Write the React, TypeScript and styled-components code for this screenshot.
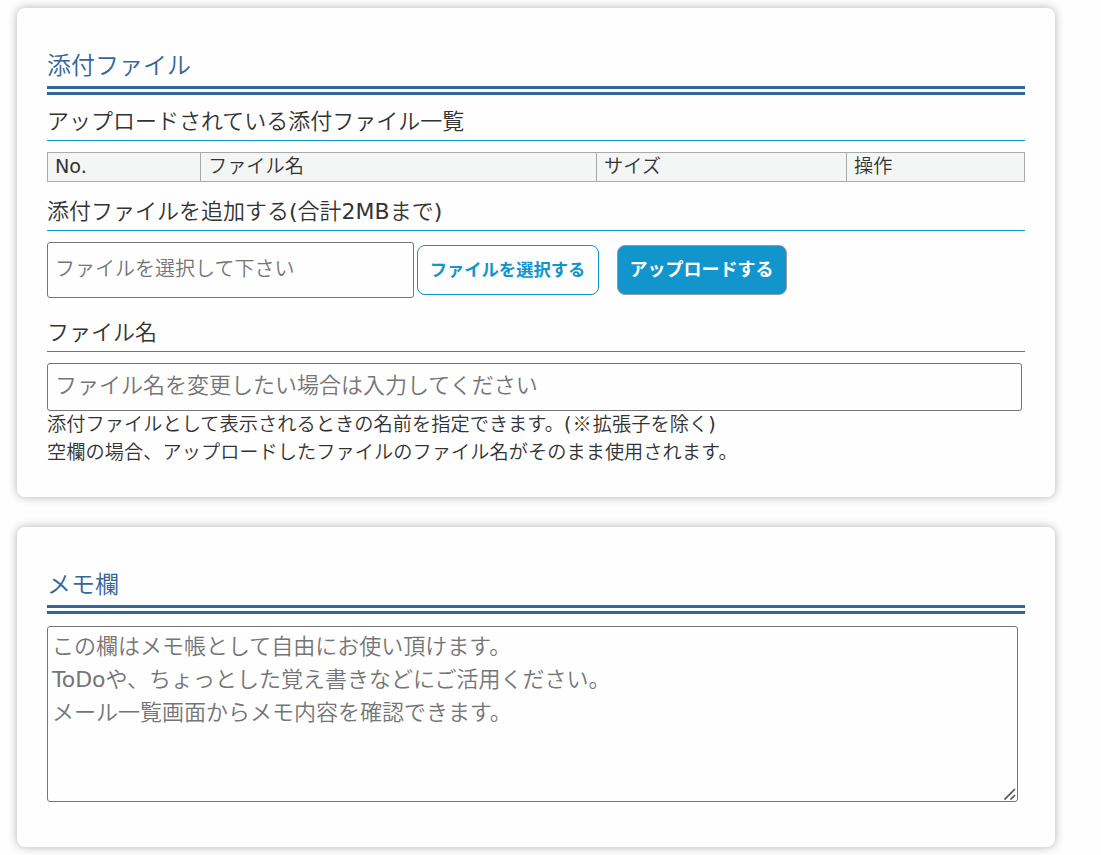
import React, {useState} from 'react';
import styled, {createGlobalStyle} from 'styled-components';

const GlobalStyle = createGlobalStyle`
  * {
    box-sizing: border-box;
  }
  body {
    margin: 0;
    background: #fefefe;
    color: #333;
    font-family: "DejaVu Sans", "Noto Sans CJK JP DemiLight", "Noto Sans CJK JP", sans-serif;
    font-weight: 400;
    font-size: 19.2px;
    line-height: 28px;
  }
`

const Page = styled.main`
  display: flex;
  flex-direction: column;
  gap: 30px;
  width: 1055px;
  padding: 8px 0 8px 17px;
`

const Card = styled.section<{ height: number }>`
  height: ${p => p.height}px;
  padding: 38px 30px 30px;
  background: #fefefe;
  border-radius: 8px;
  box-shadow: 0 0 10px rgba(0, 0, 0, 0.3);
`

const Title = styled.h2`
  height: 49px;
  margin: 0;
  color: #336699;
  border-bottom: 9px double #336699;
  font-size: 24px;
  font-weight: 400;
  line-height: 40px;
`

const SubTitle = styled.h3<{ top: number }>`
  height: 36px;
  margin: ${p => p.top}px 0 11px;
  border-bottom: 1px solid #1294cc;
  font-size: 22px;
  font-weight: 400;
  line-height: 33px;
`

const Table = styled.table`
  width: 978px;
  table-layout: fixed;
  border-collapse: collapse;
`

const HeadCell = styled.th<{ width: number }>`
  width: ${p => p.width}px;
  height: 29px;
  padding: 1px 7px;
  border: 1px solid #aaa;
  background: #f4f6f6;
  font-weight: 400;
  line-height: 26px;
  text-align: left;
`

const UploadRow = styled.div`
  display: flex;
  align-items: center;
  height: 56px;
`

const TextInput = styled.input<{ $width: number; $height: number; $size: number }>`
  display: block;
  width: ${p => p.$width}px;
  height: ${p => p.$height}px;
  padding: 0 7px 3px;
  border: 1px solid #767676;
  border-radius: 3px;
  background: #fefefe;
  font: inherit;
  font-size: ${p => p.$size}px;
  &::placeholder {
    color: #757575;
  }
`

const Button = styled.button`
  height: 50px;
  padding: 0 1px 4px 0;
  border-radius: 8px;
  font-family: "Noto Sans CJK JP", sans-serif;
  font-weight: 700;
  white-space: nowrap;
`

const SelectButton = styled(Button)`
  width: 182px;
  margin-left: 3px;
  border: 1px solid #1294cc;
  background: #fefefe;
  color: #1294cc;
  font-size: 17.3px;
`

const UploadButton = styled(Button)`
  width: 170px;
  margin-left: 18px;
  border: 1px solid #999;
  background: #1294cc;
  color: #fff;
  font-size: 18px;
`

const Note = styled.p`
  margin: 0;
  letter-spacing: 0.05px;
`

// keeps the reference mark at full width
const Mark = styled.span`
  margin: 0 1px;
  font-family: "Noto Sans CJK JP DemiLight", "Noto Sans CJK JP", sans-serif;
  line-height: 1;
`

const MemoBox = styled.div`
  position: relative;
  width: 971px;
  margin-top: 12px;
`

const Memo = styled.textarea`
  display: block;
  width: 100%;
  height: 176px;
  padding: 3px 4px;
  border: 1px solid #767676;
  border-radius: 3px;
  background: #fefefe;
  font: inherit;
  font-size: 22px;
  line-height: 33px;
  resize: none;
  &::placeholder {
    color: #757575;
  }
`

const Grip = styled.svg`
  position: absolute;
  right: 2px;
  bottom: 2px;
  pointer-events: none;
`

const columns = [
  {name: 'No.', width: 153},
  {name: 'ファイル名', width: 396},
  {name: 'サイズ', width: 250},
  {name: '操作', width: 178},
]

const memoHint = [
  'この欄はメモ帳として自由にお使い頂けます。',
  'ToDoや、ちょっとした覚え書きなどにご活用ください。',
  'メール一覧画面からメモ内容を確認できます。',
].join('\n')

function App() {
  const [fileName, setFileName] = useState('')
  const [memo, setMemo] = useState('')

  return (
    <Page lang="ja">
      <GlobalStyle/>
      <Card height={489}>
        <Title>添付ファイル</Title>
        <SubTitle top={10}>アップロードされている添付ファイル一覧</SubTitle>
        <Table>
          <thead>
            <tr>
              {columns.map(c => <HeadCell key={c.name} width={c.width}>{c.name}</HeadCell>)}
            </tr>
          </thead>
        </Table>
        <SubTitle top={13}>添付ファイルを追加する(合計2MBまで)</SubTitle>
        <UploadRow>
          <TextInput $width={367} $height={56} $size={20} readOnly placeholder="ファイルを選択して下さい"/>
          <SelectButton type="button">ファイルを選択する</SelectButton>
          <UploadButton type="button">アップロードする</UploadButton>
        </UploadRow>
        <SubTitle top={18}>ファイル名</SubTitle>
        <TextInput $width={975} $height={48} $size={22}
                   value={fileName}
                   onChange={e => setFileName(e.target.value)}
                   placeholder="ファイル名を変更したい場合は入力してください"
        />
        <Note>添付ファイルとして表示されるときの名前を指定できます。(<Mark>※</Mark>拡張子を除く)</Note>
        <Note>空欄の場合、アップロードしたファイルのファイル名がそのまま使用されます。</Note>
      </Card>
      <Card height={320}>
        <Title>メモ欄</Title>
        <MemoBox>
          <Memo value={memo} onChange={e => setMemo(e.target.value)} placeholder={memoHint}/>
          <Grip width="12" height="12" viewBox="0 0 12 12" fill="none" stroke="#555" strokeWidth="1.7">
            <path d="M0.5 11.5L11 1M6.5 11.5L11 7"/>
          </Grip>
        </MemoBox>
      </Card>
    </Page>
  )
}

export default App
